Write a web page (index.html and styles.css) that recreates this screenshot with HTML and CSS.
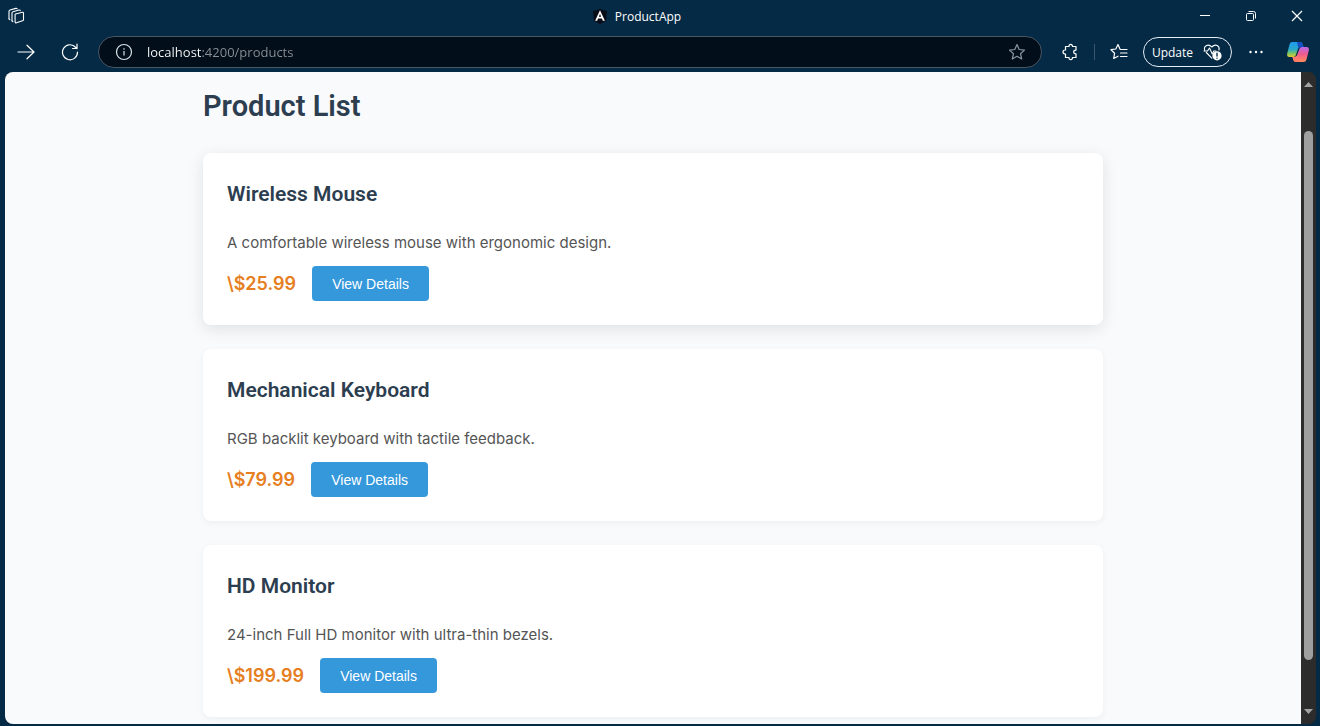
FILE: index.html
```
<!DOCTYPE html>
<html lang="en">
<head>
<meta charset="utf-8">
<title>ProductApp</title>
<link rel="stylesheet" href="styles.css">
</head>
<body>
<header class="titlebar">
  <div class="titlebar-start">
    <button class="workspaces" aria-label="Workspaces">
      <svg width="18" height="18" viewBox="0 0 18 18" fill="none" stroke="currentColor" stroke-width="1.1" stroke-linejoin="round" stroke-linecap="round"><path d="M8.500 7 15.500 5.300q1-.1 1 .8v6.600q0 .8-1 1.100L9.500 15.800q-1.400.3-1.400-1V7.800q0-.6.4-.8z"/><path d="M5 13.800V6q0-1 1-1.300L12 3q1-.2 1.300.6"/><path d="M2 11.800V4.300q0-1 1-1.300L8.800 1.400q1-.2 1.300.4"/><path d="M2 11.800q.1.900 1 1M5 13.800q.1.900 1 1"/></svg>
    </button>
  </div>
  <div class="tab">
    <svg width="14" height="15" viewBox="0 0 14 15"><path fill="#080d18" d="M7 0l7 2.300-1 9.700-6 3-6-3L0 2.300z"/><path fill="#fff" d="M7 1.200 2.100 11.800h2.100l.9-2.300h3.800l.9 2.300h2.100zM7 4.900l1.200 2.900H5.800z"/></svg>
    <span>ProductApp</span>
  </div>
  <div class="window-controls">
    <button aria-label="Minimize"><svg width="12" height="12" viewBox="0 0 12 12" fill="none" stroke="currentColor"><path d="M1 5.500h10"/></svg></button>
    <button aria-label="Restore"><svg width="12" height="12" viewBox="0 0 12 12" fill="none" stroke="currentColor"><rect x="1.500" y="3.500" width="7" height="7" rx="1"/><path d="M3.500 1.500h5q2 0 2 2v5"/></svg></button>
    <button aria-label="Close"><svg width="12" height="12" viewBox="0 0 12 12" fill="none" stroke="currentColor" stroke-width="1.200"><path d="M1 1l10 10M11 1 1 11"/></svg></button>
  </div>
</header>

<nav class="toolbar" aria-label="Browser">
  <button class="tool" aria-label="Forward"><svg width="18" height="18" viewBox="0 0 18 18" fill="none" stroke="currentColor" stroke-width="1.200" stroke-linecap="round" stroke-linejoin="round"><path d="M1 9h16M10 2.200 17 9l-7 6.800"/></svg></button>
  <button class="tool" aria-label="Refresh"><svg width="18" height="18" viewBox="0 0 18 18" fill="none" stroke="currentColor" stroke-width="1.200" stroke-linecap="round" stroke-linejoin="round"><path d="M16.500 9A7.500 7.500 0 1 1 14.800 4.500L16 5.500M16 1v4.500h-4.500"/></svg></button>
  <div class="address">
    <button class="address-icon" aria-label="Site information"><svg width="18" height="18" viewBox="0 0 18 18" fill="none" stroke="currentColor" stroke-width="1.200"><circle cx="9" cy="9" r="7.500"/><path d="M9 8v4.500M9 5.300v1.400"/></svg></button>
    <input class="url" type="text" value="localhost:4200/products" aria-label="Address">
    <button class="address-icon favorite" aria-label="Add to favorites"><svg width="18" height="18" viewBox="0 0 18 18" fill="none" stroke="currentColor" stroke-width="1.200" stroke-linejoin="round"><path d="M9 1.500l2.200 5 5.300.6-4 3.600 1.200 5.300L9 13.300 4.300 16l1.200-5.300-4-3.600 5.300-.6z"/></svg></button>
  </div>
  <button class="tool" aria-label="Extensions"><svg width="18" height="18" viewBox="0 0 18 18" fill="none" stroke="currentColor" stroke-width="1.200" stroke-linejoin="round"><path d="M4.500 3.500H8Q8 1.300 9.700 1.300T11.500 3.500H15V7.200Q12.700 7.200 12.700 9T15 10.900v3.600h-3.500q0 2.200-1.800 2.200T8 14.500H4.500V11Q2 11 2 9t2.500-2z"/></svg></button>
  <span class="divider"></span>
  <button class="tool" aria-label="Favorites"><svg width="18" height="18" viewBox="0 0 18 18" fill="none" stroke="currentColor" stroke-width="1.200" stroke-linecap="round" stroke-linejoin="round"><path d="M15 6.500H10.200L8 1.500 5.800 6 1 6.700l3.600 3.500-.9 5.300L8 13.200M10.500 6.500H17M10.500 10H17M10.500 13.500H17"/></svg></button>
  <button class="update">Update
    <svg width="20" height="18" viewBox="0 0 20 18" fill="none" stroke="currentColor" stroke-width="1.100" stroke-linecap="round" stroke-linejoin="round"><path d="M1.600 7C.6 3 5.300.2 8.800 4c3.700-3.800 8.200-1 7.200 3M3.300 9.500l5.500 5.700M1 8h3.500L6.500 5l2.800 6 1.500-3H13"/><circle cx="14" cy="12.800" r="4.600" fill="#fff" stroke="none"/><path stroke="#052a46" stroke-width="1.400" d="M14 10.200v2.800M14 15.200v.1"/></svg>
  </button>
  <button class="tool" aria-label="Settings and more"><svg width="16" height="16" viewBox="0 0 16 16" fill="currentColor"><circle cx="2.500" cy="8" r="1.200"/><circle cx="8" cy="8" r="1.200"/><circle cx="13.500" cy="8" r="1.200"/></svg></button>
  <button class="copilot" aria-label="Copilot">
    <svg width="24" height="22" viewBox="0 0 24 22">
      <defs>
        <linearGradient id="cool" x1="0" y1="0" x2="0" y2="1"><stop offset="0" stop-color="#1d9cf0"/><stop offset=".5" stop-color="#2ba9c8"/><stop offset=".78" stop-color="#83c85b"/><stop offset="1" stop-color="#e9c735"/></linearGradient>
        <linearGradient id="warm" x1="0" y1="0" x2="0" y2="1"><stop offset="0" stop-color="#b46cf0"/><stop offset=".45" stop-color="#ee5a90"/><stop offset="1" stop-color="#ff8b59"/></linearGradient>
      </defs>
      <path fill="url(#cool)" d="M6 1h8q2 0 2.600 2l.9 3h-3q-2 0-2.600 2l-2 6q-.6 2-2.500 2H3.500Q.5 16 1.200 12.500L3.500 3.500Q4 1 6 1z"/>
      <path fill="#174fc5" d="M11 1h3q2 0 2.600 2l.9 3h-3q-1.600 0-2.200 1.200z"/>
      <path fill="url(#warm)" d="M16 6h4.500q3 .3 2.300 3.500l-2.300 9Q20 21 17.500 21H10q-2 0-2.700-2l-.8-3h2q2 0 2.600-2l2.300-6Q14 6 16 6z"/>
      <path fill="#ff7a6b" d="M6.500 16h2q1.600 0 2.300-1.200L13 21h-3q-2 0-2.700-2z"/>
    </svg>
  </button>
</nav>

<div class="viewport">
  <main class="page">
    <div class="product-list">
      <h1>Product List</h1>
      <article class="card active">
        <h2>Wireless Mouse</h2>
        <p>A comfortable wireless mouse with ergonomic design.</p>
        <div class="purchase"><span class="price">\$25.99</span><button class="details">View Details</button></div>
      </article>
      <article class="card">
        <h2>Mechanical Keyboard</h2>
        <p>RGB backlit keyboard with tactile feedback.</p>
        <div class="purchase"><span class="price">\$79.99</span><button class="details">View Details</button></div>
      </article>
      <article class="card">
        <h2>HD Monitor</h2>
        <p>24-inch Full HD monitor with ultra-thin bezels.</p>
        <div class="purchase"><span class="price">\$199.99</span><button class="details">View Details</button></div>
      </article>
    </div>
  </main>
  <div class="scrollbar" aria-hidden="true">
    <svg width="9" height="5" viewBox="0 0 9 5"><path fill="#a3a3a3" d="M0 5 4.500 0 9 5z"/></svg>
    <div class="track"><div class="thumb"></div></div>
    <svg width="9" height="5" viewBox="0 0 9 5"><path fill="#a3a3a3" d="M0 0h9L4.500 5z"/></svg>
  </div>
</div>
</body>
</html>
```
FILE: styles.css
```
* { box-sizing: border-box; }

body {
  display: flex;
  flex-direction: column;
  height: 100vh;
  margin: 0;
  overflow: hidden;
  background: #052a46;
  color: #fff;
  font-family: "Open Sans", "Noto Sans", sans-serif;
}

button {
  display: flex;
  align-items: center;
  justify-content: center;
  padding: 0;
  border: 0;
  background: none;
  color: inherit;
  font: inherit;
}

svg { flex: none; }

/* Browser chrome */
.titlebar {
  display: flex;
  flex: none;
  height: 32px;
}

.titlebar-start {
  display: flex;
  width: 92px;
  padding-left: 7px;
}

.tab {
  display: flex;
  flex: 1;
  align-items: center;
  justify-content: center;
  gap: 8px;
  font-size: 12px;
}

.window-controls { display: flex; }
.window-controls button { width: 46px; }

.toolbar {
  display: flex;
  flex: none;
  align-items: center;
  height: 40px;
  padding: 0 2px 0 4px;
}

.tool {
  width: 44px;
  height: 32px;
}

.address {
  display: flex;
  flex: 1;
  align-items: center;
  height: 32px;
  margin: 0 6px;
  padding: 0 15px 0 16px;
  border: 1px solid #485563;
  border-radius: 16px;
  background: #020e1a;
}

.address-icon { color: #dce3e9; }
.favorite { color: #8b959f; }

.url {
  flex: 1;
  min-width: 0;
  margin-left: 14px;
  padding: 0;
  border: 0;
  outline: 0;
  background: linear-gradient(90deg, #fff 55px, #8b9095 55px);
  -webkit-background-clip: text;
  background-clip: text;
  color: transparent;
  font: 13px/20px "Open Sans", "Noto Sans", sans-serif;
}

.divider {
  width: 1px;
  height: 16px;
  margin: 0 2px;
  background: #3b5770;
}

.update {
  gap: 10px;
  width: 89px;
  height: 30px;
  margin: 0 2px;
  border: 1px solid #e4edf5;
  border-radius: 15px;
  font-size: 12px;
  font-weight: 500;
}

.copilot {
  width: 40px;
  height: 32px;
}

/* Page area */
.viewport {
  display: flex;
  flex: 1;
  min-height: 0;
  margin: 0 4px 2px 5px;
  overflow: hidden;
  border-radius: 8px;
  background: #2c2c2c;
}

.page {
  flex: 1;
  overflow: hidden;
  background: #f9fafc;
}

.product-list {
  display: flex;
  flex-direction: column;
  gap: 24px;
  max-width: 900px;
  margin: 0 auto;
  padding-top: 11px;
}

h1, h2 {
  margin: 0;
  color: #2c3e50;
  font-family: Roboto, sans-serif;
}

h1 {
  font-size: 29px;
  line-height: 46px;
  font-weight: 600;
}

.card {
  padding: 24px;
  border-radius: 8px;
  background: #fff;
  box-shadow: 0 2px 6px rgba(0, 0, 0, 0.05);
}

.card.active { box-shadow: 0 4px 16px rgba(0, 0, 0, 0.1); }

.card h2 {
  margin-bottom: 21px;
  font-size: 21px;
  line-height: 34px;
  font-weight: 600;
}

.card p {
  margin: 0 0 12px;
  color: #555;
  font: 15px/22px Inter, sans-serif;
}

.purchase {
  display: flex;
  align-items: center;
  gap: 16px;
}

.price {
  color: #e67e22;
  font: 600 18px/35px Inter, sans-serif;
}

.details {
  width: 117px;
  height: 35px;
  border-radius: 4px;
  background: #3498db;
  color: #fff;
  font: 14px/20px "Liberation Sans", Arial, sans-serif;
}

.scrollbar {
  display: flex;
  flex-direction: column;
  align-items: center;
  width: 15px;
  padding: 10px 0;
  background: #2c2c2c;
}

.track {
  flex: 1;
  width: 9px;
  padding: 44px 0 49px;
}

.thumb {
  height: 100%;
  border-radius: 5px;
  background: #9f9f9f;
}
```
